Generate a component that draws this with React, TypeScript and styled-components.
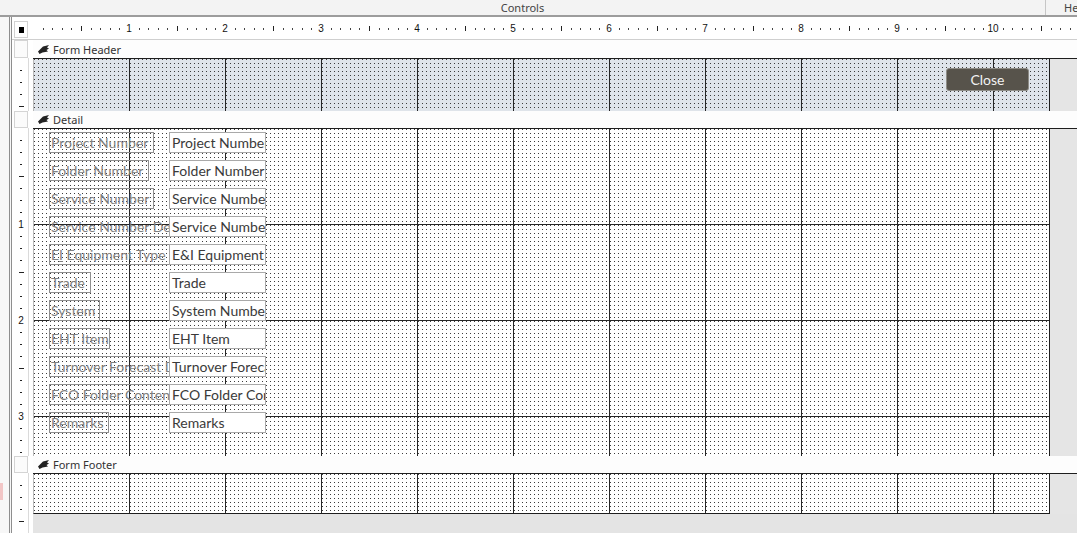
import React from "react";
import styled, { createGlobalStyle } from "styled-components";

const GlobalStyle = createGlobalStyle`
  html, body {
    margin: 0;
    padding: 0;
    width: 1077px;
    height: 533px;
    overflow: hidden;
    background: #ffffff;
  }
`;

const INCH = 96;
const FORM_WIDTH = 1017;

interface IField {
  label: React.ReactNode;
  labelWidth: number;
  value: string;
}

const fields: IField[] = [
  { label: "Project Number", labelWidth: 105, value: "Project Number" },
  { label: "Folder Number", labelWidth: 100, value: "Folder Number" },
  { label: "Service Number", labelWidth: 105, value: "Service Number" },
  { label: "Service Number Description", labelWidth: 124, value: "Service Number Description" },
  {
    label: (
      <>
        E<u>I</u> Equipment Type
      </>
    ),
    labelWidth: 124,
    value: "E&I Equipment Type",
  },
  { label: "Trade", labelWidth: 42, value: "Trade" },
  { label: "System", labelWidth: 51, value: "System Number" },
  { label: "EHT Item", labelWidth: 61, value: "EHT Item" },
  { label: "Turnover Forecast Date", labelWidth: 124, value: "Turnover Forecast Date" },
  { label: "FCO Folder Contents", labelWidth: 124, value: "FCO Folder Contents" },
  { label: "Remarks", labelWidth: 60, value: "Remarks" },
];

const HRuler = () => {
  const count = Math.floor(1044 / 9.6);
  return (
    <RulerSvg width={1044} height={19}>
      {Array.from({ length: count }, (_, i) => i + 1).map((k) => {
        const x = Math.round(k * 9.6);
        if (k % 10 === 0) {
          return (
            <text key={k} x={x} y={12} fontSize={10} textAnchor="middle" fill="#111" fontFamily="Liberation Sans, sans-serif">
              {k / 10}
            </text>
          );
        }
        return k % 5 === 0 ? (
          <rect key={k} x={x} y={6} width={1} height={5} fill="#222" />
        ) : (
          <rect key={k} x={x} y={8} width={1} height={2} fill="#444" />
        );
      })}
    </RulerSvg>
  );
};

const VRuler = ({ height }: { height: number }) => (
  <RulerSvg width={14} height={height}>
    {Array.from({ length: Math.floor(height / 12) }, (_, i) => i + 1).map((k) => {
      const y = k * 12;
      if (k % 8 === 0) {
        return (
          <text key={k} x={7} y={y + 4} fontSize={10} textAnchor="middle" fill="#111" fontFamily="Liberation Sans, sans-serif">
            {k / 8}
          </text>
        );
      }
      const w = k % 4 === 0 ? 5 : 2;
      return <rect key={k} x={7 - Math.floor(w / 2)} y={y} width={w} height={1} fill="#222" />;
    })}
  </RulerSvg>
);

const SectionIcon = () => (
  <RulerSvg width={11} height={9} viewBox="0 0 11 9">
    <path d="M0 6.5 L5 1.5 L11 0 L9 2.5 L11 3.5 L8.5 5 L10 6.5 L4.5 7.5 L1.5 9 Z" fill="#222" />
  </RulerSvg>
);

const SectionBar = ({ title, height }: { title: string; height: number }) => (
  <Row>
    <Side>
      <SideBox />
    </Side>
    <Bar $height={height}>
      <SectionIcon />
      {title}
    </Bar>
  </Row>
);

const App: React.FC = () => {
  return (
    <Screen>
      <GlobalStyle />
      <Ribbon>
        <RibbonGroup $width={1046} $centered>
          Controls
        </RibbonGroup>
        <RibbonGroup>Header / Footer</RibbonGroup>
      </Ribbon>
      <Workspace>
        <FrameEdge>
          <Blip />
        </FrameEdge>
        <Designer>
          <RulerRow>
            <Side>
              <Corner>
                <CornerMark />
              </Corner>
            </Side>
            <HRuler />
          </RulerRow>

          <SectionBar title="Form Header" height={18} />
          <Row>
            <Side>
              <RulerStrip>
                <VRuler height={53} />
              </RulerStrip>
            </Side>
            <SectionBody>
              <CanvasRow>
                <Canvas $height={52} $tint="#dfe4ea">
                  <CloseButton>Close</CloseButton>
                </Canvas>
                <Filler />
              </CanvasRow>
            </SectionBody>
          </Row>

          <SectionBar title="Detail" height={17} />
          <Row>
            <Side>
              <RulerStrip>
                <VRuler height={328} />
              </RulerStrip>
            </Side>
            <SectionBody>
              <CanvasRow>
                <Canvas $height={327} $tint="#ffffff" $hLines>
                  <FieldList>
                    {fields.map((f, i) => (
                      <FieldRow key={i}>
                        <FieldLabel $width={f.labelWidth}>{f.label}</FieldLabel>
                        <FieldBox>{f.value}</FieldBox>
                      </FieldRow>
                    ))}
                  </FieldList>
                </Canvas>
                <Filler />
              </CanvasRow>
            </SectionBody>
          </Row>

          <SectionBar title="Form Footer" height={17} />
          <Row>
            <Side>
              <RulerStrip>
                <VRuler height={64} />
              </RulerStrip>
            </Side>
            <SectionBody>
              <CanvasRow>
                <Canvas $height={39} $tint="#ffffff" $closed />
                <Filler />
              </CanvasRow>
              <Tail />
            </SectionBody>
          </Row>
        </Designer>
      </Workspace>
    </Screen>
  );
};

export default App;

const RulerSvg = styled.svg`
  display: block;
  flex: none;
`;

const Screen = styled.div`
  display: flex;
  flex-direction: column;
  width: 1077px;
  height: 533px;
  overflow: hidden;
  font-family: "Noto Sans", "Liberation Sans", sans-serif;
`;

const Ribbon = styled.div`
  display: flex;
  height: 15px;
  flex: none;
  background: #f3f3f3;
  border-bottom: 2px solid #9c9c9c;
`;

const RibbonGroup = styled.div<{ $width?: number; $centered?: boolean }>`
  flex: ${(p) => (p.$width ? `0 0 ${p.$width}px` : "1")};
  display: flex;
  align-items: center;
  justify-content: ${(p) => (p.$centered ? "center" : "flex-start")};
  padding-left: ${(p) => (p.$centered ? "0" : "18px")};
  box-sizing: border-box;
  border-right: ${(p) => (p.$width ? "1px solid #c6c6c6" : "none")};
  font-size: 11px;
  color: #444;
  white-space: nowrap;
  overflow: hidden;
`;

const Workspace = styled.div`
  display: flex;
  flex: 1;
  min-height: 0;
`;

const FrameEdge = styled.div`
  width: 12px;
  flex: none;
  box-sizing: border-box;
  background: #f7f7f7;
  border-right: 3px double #8e8e8e;
  display: flex;
  flex-direction: column;
`;

const Blip = styled.div`
  margin-top: 466px;
  width: 3px;
  height: 17px;
  background: #f2c6c6;
`;

const Designer = styled.div`
  flex: 1;
  display: flex;
  flex-direction: column;
  padding-top: 3px;
  background: #ffffff;
  min-width: 0;
`;

const Row = styled.div`
  display: flex;
  flex: none;
`;

const RulerRow = styled(Row)`
  height: 19px;
  border-bottom: 1px solid #cfcfcf;
`;

const Side = styled.div`
  width: 21px;
  flex: none;
  box-sizing: border-box;
  padding-left: 2px;
  display: flex;
`;

const Corner = styled.div`
  width: 14px;
  height: 17px;
  margin-top: 1px;
  box-sizing: border-box;
  border: 1px solid #d2d2d2;
  display: flex;
  align-items: center;
  justify-content: center;
`;

const CornerMark = styled.div`
  width: 5px;
  height: 6px;
  background: #000;
`;

const SideBox = styled.div`
  width: 14px;
  box-sizing: border-box;
  border: 1px solid #d4d4d4;
  background: #fbfbfb;
`;

const RulerStrip = styled.div`
  width: 15px;
  box-sizing: border-box;
  border-right: 1px solid #dadada;
  overflow: hidden;
`;

const Bar = styled.div<{ $height: number }>`
  flex: 1;
  height: ${(p) => p.$height}px;
  display: flex;
  align-items: center;
  gap: 4px;
  padding-left: 5px;
  background: #fdfdfd;
  font-size: 11px;
  color: #333;
`;

const SectionBody = styled.div`
  flex: 1;
  display: flex;
  flex-direction: column;
  border-top: 1px solid #1e1e1e;
`;

const CanvasRow = styled.div`
  display: flex;
`;

const Canvas = styled.div<{ $height: number; $tint: string; $hLines?: boolean; $closed?: boolean }>`
  width: ${FORM_WIDTH - 2}px;
  height: ${(p) => p.$height}px;
  flex: none;
  display: flex;
  border-left: 1px solid #b9b9b9;
  border-right: 1px solid #1e1e1e;
  border-bottom: ${(p) => (p.$closed ? "1px solid #1e1e1e" : "none")};
  background-color: ${(p) => p.$tint};
  background-image: linear-gradient(to right, #262626 1px, transparent 1px),
    ${(p) => (p.$hLines ? "linear-gradient(to bottom, #262626 1px, transparent 1px)," : "")}
    conic-gradient(at 1px 1px, transparent 75%, #3c3c3c 0);
  background-size: ${INCH}px 100%, ${(p) => (p.$hLines ? `100% ${INCH}px,` : "")} 4px 4px;
  background-position: 95px 0, ${(p) => (p.$hLines ? "0 -1px," : "")} 0 0;
`;

const Filler = styled.div`
  flex: 1;
  background: #e5e5e5;
`;

const Tail = styled.div`
  flex: 1;
  min-height: 19px;
  background: #e4e4e4;
`;

const CloseButton = styled.div`
  margin: 9px 20px 0 auto;
  width: 83px;
  height: 23px;
  box-sizing: border-box;
  border: 1px solid #8e8c86;
  border-radius: 3px;
  background: #57534b;
  color: #f2f2f2;
  font-family: Lato, "Liberation Sans", sans-serif;
  font-size: 14px;
  display: flex;
  align-items: center;
  justify-content: center;
`;

const FieldList = styled.div`
  display: flex;
  flex-direction: column;
  gap: 7px;
  padding: 3px 0 0 15px;
`;

const FieldRow = styled.div`
  display: grid;
  grid-template-columns: 120px 97px;
  height: 21px;
`;

const FieldLabel = styled.div<{ $width: number }>`
  width: ${(p) => p.$width}px;
  height: 21px;
  box-sizing: border-box;
  border: 1px solid #8f8f8f;
  padding-left: 1px;
  line-height: 19px;
  font-family: Lato, "Liberation Sans", sans-serif;
  font-size: 14px;
  color: #808080;
  white-space: nowrap;
  overflow: hidden;
`;

const FieldBox = styled.div`
  position: relative;
  z-index: 1;
  height: 21px;
  box-sizing: border-box;
  border: 1px solid #a9a9a9;
  background: #ffffff;
  padding-left: 2px;
  line-height: 19px;
  font-family: Lato, "Liberation Sans", sans-serif;
  font-size: 14px;
  color: #3a3a3a;
  white-space: nowrap;
  overflow: hidden;
`;
